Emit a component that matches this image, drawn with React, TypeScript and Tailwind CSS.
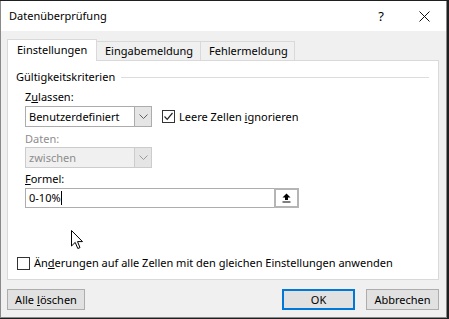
import React from "react";

const font = { fontFamily: '"Segoe UI", "Noto Sans", "Liberation Sans", sans-serif' };

function Chevron({ color = "#606060" }: { color?: string }) {
  return (
    <svg width="9" height="6" viewBox="0 0 9 6">
      <path d="M0.5 0.5 L4.5 4.5 L8.5 0.5" fill="none" stroke={color} strokeWidth="1" />
    </svg>
  );
}

function Check() {
  return (
    <svg width="11" height="11" viewBox="0 0 11 11">
      <path d="M1.5 5.5 L4.2 8.3 L9.5 2" fill="none" stroke="#222" strokeWidth="1.2" />
    </svg>
  );
}

export default function App() {
  return (
    <div className="w-[449px] h-[319px] bg-[#1f1f1f] pt-px text-[11px] leading-[16px] text-black" style={font}>
      <div className="relative w-[447px] h-[317px] flex flex-col border border-t-0 border-[#8a8a8a] bg-[#f0f0f0]">
        {/* title bar */}
        <div className="h-[30px] bg-white flex items-center pl-[8px] pr-[16px]">
          <span className="text-[11px] flex-1">Datenüberprüfung</span>
          <span className="mr-[35px] text-[13px]">?</span>
          <svg width="11" height="11" viewBox="0 0 11 11">
            <path d="M0.5 0.5 L10.5 10.5 M10.5 0.5 L0.5 10.5" stroke="#111" strokeWidth="1" />
          </svg>
        </div>
        {/* body */}
        <div className="flex-1 flex flex-col pl-[6px] pr-[7px] pt-[7px]">
          {/* tabs */}
          <div className="flex items-end h-[22px]">
            <div className="h-[22px] w-[90px] bg-white border border-b-0 border-[#d9d9d9] pl-[9px] flex items-center relative z-10 -mb-px pb-px">
              Einstellungen
            </div>
            <div className="h-[19px] w-[104px] border border-l-0 border-b-0 border-[#d9d9d9] flex items-center pl-[8px]">
              Eingabemeldung
            </div>
            <div className="h-[19px] w-[94px] border border-l-0 border-b-0 border-[#d9d9d9] flex items-center pl-[8px]">
              Fehlermeldung
            </div>
          </div>
          {/* panel */}
          <div className="h-[220px] bg-white border border-[#d9d9d9] flex flex-col px-[8px] pt-[8px]">
            <div className="flex items-center">
              <span>Gültigkeitskriterien</span>
              <div className="flex-1 h-px bg-[#dcdcdc] ml-[6px] mr-[1px]" />
            </div>
            <div className="pl-[9px] flex flex-col">
              <div className="mt-[4px]">
                Z<span className="underline">u</span>lassen:
              </div>
              <div className="flex items-center mt-px">
                <div className="w-[127px] h-[21px] border border-[#acacac] flex">
                  <div className="flex-1 bg-white pl-[3px] flex items-center">Benutzerdefiniert</div>
                  <div className="w-[17px] bg-[#e5e5e5] border-l border-[#acacac] flex items-center justify-center">
                    <Chevron />
                  </div>
                </div>
                <div className="ml-[10px] w-[13px] h-[13px] border border-[#333] bg-white flex items-center justify-center">
                  <Check />
                </div>
                <span className="ml-[4px]">
                  Leere Zellen <span className="underline">i</span>gnorieren
                </span>
              </div>
              <div className="mt-[4px] text-[#8d8d8d]">Daten:</div>
              <div className="w-[127px] h-[21px] border border-[#cccccc] flex">
                <div className="flex-1 bg-[#f0f0f0] pl-[3px] flex items-center text-[#8d8d8d]">zwischen</div>
                <div className="w-[17px] bg-[#e5e5e5] border-l border-[#cccccc] flex items-center justify-center">
                  <Chevron color="#9a9a9a" />
                </div>
              </div>
              <div className="mt-[3px]">
                <span className="underline">F</span>ormel:
              </div>
              <div className="flex mt-px">
                <div className="w-[249px] h-[20px] border border-[#adadad] border-r-0 bg-white pl-[3px] flex items-center">
                  0-10%<span className="inline-block w-px h-[14px] bg-black" />
                </div>
                <div className="w-[25px] h-[20px] border-2 border-[#b5b5b5] bg-white flex items-center justify-center">
                  <svg width="9" height="10" viewBox="0 0 9 10">
                    <path d="M4.5 0.5 L8.5 4.5 L6 4.5 L6 7 L3 7 L3 4.5 L0.5 4.5 Z" fill="#000" />
                    <rect x="0.5" y="8.5" width="8" height="1" fill="#000" />
                  </svg>
                </div>
              </div>
            </div>
            <div className="flex items-center mt-[47px] pl-[1px]">
              <div className="w-[13px] h-[13px] border border-[#333] bg-white" />
              <span className="ml-[4px]">
                Än<span className="underline">d</span>erungen auf alle Zellen mit den gleichen Einstellungen anwenden
              </span>
            </div>
          </div>
          {/* buttons */}
          <div className="flex mt-[9px]">
            <div className="w-[78px] h-[21px] bg-[#e1e1e1] border border-[#adadad] flex items-center justify-center">
              Alle <span className="underline ml-[3px]">l</span>öschen
            </div>
            <div className="flex-1" />
            <div className="w-[73px] h-[21px] bg-[#e1e1e1] border-2 border-[#0078d7] flex items-center justify-center">
              OK
            </div>
            <div className="w-[73px] h-[21px] ml-[11px] bg-[#e1e1e1] border border-[#adadad] flex items-center justify-center">
              Abbrechen
            </div>
          </div>
        </div>
        {/* mouse cursor */}
        <svg className="absolute left-[70px] top-[229px]" width="13" height="20" viewBox="0 0 13 20">
          <path d="M0.5 0.5 L0.5 16 L4.2 12.4 L6.8 18.5 L9 17.6 L6.5 11.6 L11.5 11.6 Z" fill="#fff" stroke="#000" strokeWidth="1" strokeLinejoin="miter" />
        </svg>
      </div>
    </div>
  );
}
